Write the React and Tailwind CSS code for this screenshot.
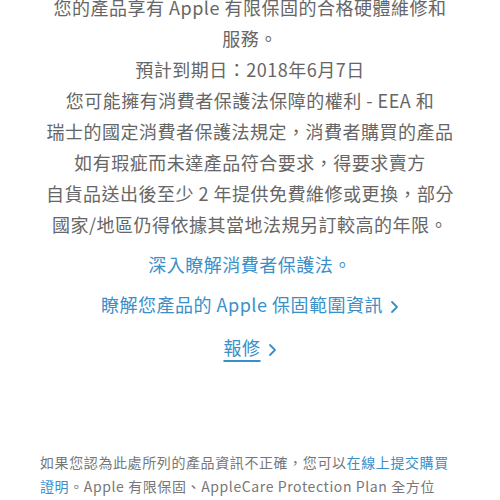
import React from 'react';

const Chevron = () => (
    <svg width="9" height="14" viewBox="0 0 9 14" className="inline-block ml-[7px] mb-[1px]">
        <path d="M2 2 L7 7 L2 12" fill="none" stroke="#3a8fc9" strokeWidth="1.8" strokeLinecap="round" strokeLinejoin="round" />
    </svg>
);

const lines = [
    '您的產品享有 Apple 有限保固的合格硬體維修和',
    '服務。',
];

const rights = [
    '您可能擁有消費者保護法保障的權利 - EEA 和',
    '瑞士的國定消費者保護法規定，消費者購買的產品',
    '如有瑕疵而未達產品符合要求，得要求賣方',
    '自貨品送出後至少 2 年提供免費維修或更換，部分',
    '國家/地區仍得依據其當地法規另訂較高的年限。',
];

export default function App() {
    const font = { fontFamily: '"Noto Sans CJK TC", "Noto Sans", sans-serif' };
    return (
        <div className="w-[500px] h-[500px] overflow-hidden bg-white" style={font}>
            <div className="-mt-[8px] flex flex-col items-center text-center text-[18px] leading-[31px] tracking-[0.5px] text-[#666]">
                {lines.map((l) => (
                    <div key={l} className="whitespace-nowrap">{l}</div>
                ))}
                <div className="whitespace-nowrap">預計到期日：2018年6月7日</div>
                {rights.map((l) => (
                    <div key={l} className="whitespace-nowrap">{l}</div>
                ))}
                <div className="mt-[9px] whitespace-nowrap text-[#3a8fc9]">深入瞭解消費者保護法。</div>
                <div className="mt-[9px] whitespace-nowrap text-[#3a8fc9]">
                    瞭解您產品的 Apple 保固範圍資訊<Chevron />
                </div>
                <div className="mt-[12px] whitespace-nowrap text-[#3a8fc9]">
                    <span className="underline underline-offset-[5px] decoration-[1.5px]">報修</span><Chevron />
                </div>
            </div>
            <div className="mt-[87px] pl-[40px] pr-[36px] text-[14px] leading-[24px] tracking-[0.6px] text-[#777]">
                <div className="whitespace-nowrap">
                    如果您認為此處所列的產品資訊不正確，您可以<span className="text-[#3a8fc9]">在線上提交購買</span>
                </div>
                <div className="whitespace-nowrap">
                    <span className="text-[#3a8fc9]">證明</span>。Apple 有限保固、AppleCare Protection Plan 全方位
                </div>
            </div>
        </div>
    );
}
